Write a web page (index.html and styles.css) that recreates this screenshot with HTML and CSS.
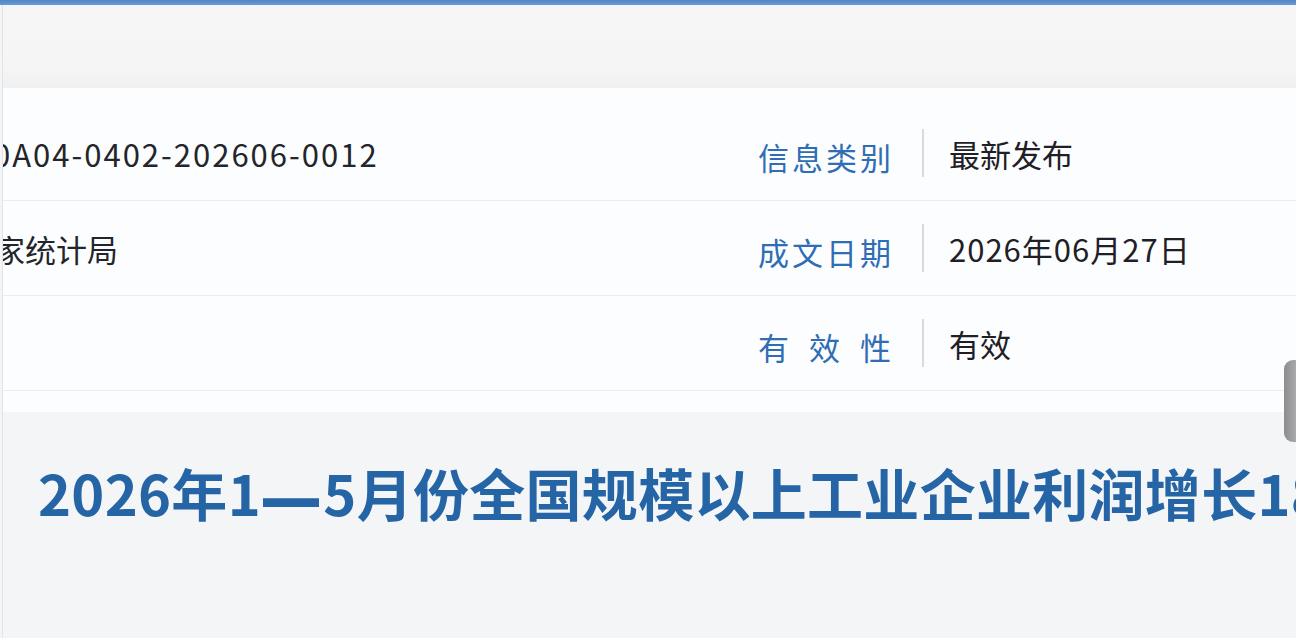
FILE: index.html
```html
<!DOCTYPE html>
<html lang="zh-CN">
<head>
<meta charset="utf-8">
<title>2026年1—5月份全国规模以上工业企业利润</title>
<link rel="stylesheet" href="styles.css">
</head>
<body>
<div class="topbar"></div>
<div class="page">
  <div class="head-space"></div>
  <div class="card">
    <div class="row">
      <div class="left"><span class="clip clip-1">0A04-0402-202606-0012</span></div>
      <div class="label">信息类别</div>
      <div class="sep"></div>
      <div class="value">最新发布</div>
    </div>
    <div class="row">
      <div class="left"><span class="clip clip-2">国家统计局</span></div>
      <div class="label">成文日期</div>
      <div class="sep"></div>
      <div class="value value-date">2026年06月27日</div>
    </div>
    <div class="row">
      <div class="left"></div>
      <div class="label">有效性</div>
      <div class="sep"></div>
      <div class="value">有效</div>
    </div>
  </div>
  <div class="title-area">
    <h1 class="title">2026年1<span class="dash">—</span>5月份全国规模以上工业企业利润增长18.3%</h1>
  </div>
</div>
<div class="scroll-thumb"></div>
</body>
</html>
```

FILE: styles.css
```css
html, body {
  margin: 0;
  padding: 0;
  width: 1296px;
  height: 638px;
  overflow: hidden;
  background: #f4f5f7;
  font-family: "Noto Sans CJK SC", "Noto Sans", sans-serif;
}

.topbar {
  height: 5px;
  background: linear-gradient(#4f86c6, #6c9bd2);
}

.page {
  margin-left: 2px;
  border-left: 1px solid #e2e3e6;
  height: 633px;
  display: flex;
  flex-direction: column;
  overflow: hidden;
}

.head-space {
  height: 83px;
  background: linear-gradient(#f6f6f7 0%, #f5f5f6 75%, #f0f0f1 100%);
}

.card {
  background: #fcfdfe;
  padding: 18px 0 21px;
  box-shadow: 0 2px 3px rgba(0, 0, 0, 0.04);
}

.row {
  display: grid;
  grid-template-columns: 755px 133px 2px 1fr;
  align-items: center;
  height: 94px;
  border-bottom: 1px solid #ebedf0;
}

.left {
  overflow: hidden;
  white-space: nowrap;
  font-size: 31px;
  color: #24252a;
}

.clip {
  display: block;
}

.clip-1 {
  text-indent: -10px;
  letter-spacing: 2px;
}

.clip-2 {
  text-indent: -40px;
}

.label {
  font-size: 31px;
  color: #2f6db4;
  text-align: justify;
  text-align-last: justify;
  padding-top: 6px;
}

.sep {
  height: 48px;
  width: 2px;
  background: #d9dadd;
  margin-left: 31px;
}

.value {
  font-size: 31px;
  color: #1f2026;
  padding-left: 56px;
}

.value-date {
  letter-spacing: 1px;
}

.title-area {
  flex: 1;
  background: #f4f5f7;
  padding-top: 48px;
  padding-left: 35px;
  overflow: hidden;
}

.title {
  margin: 0;
  white-space: nowrap;
  font-size: 56px;
  font-weight: 700;
  color: #2565a6;
  line-height: 64px;
  letter-spacing: 0.3px;
}

.dash {
  font-family: "Liberation Sans", sans-serif;
  font-weight: 700;
  display: inline-block;
  transform: scale(1.0, 1.6);
  margin: 0 4px 0 2px;
}

.scroll-thumb {
  position: absolute;
  left: 1284px;
  top: 360px;
  width: 16px;
  height: 82px;
  border-radius: 9px 0 0 9px;
  background: linear-gradient(90deg, #8c8c8e, #b4b4b6);
}
```
